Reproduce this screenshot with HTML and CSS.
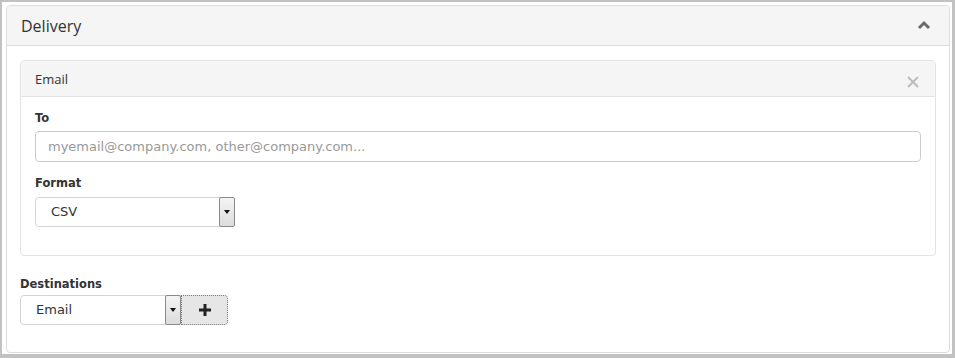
FILE: index.html
```html
<!DOCTYPE html>
<html lang="en">
<head>
<meta charset="UTF-8" />
<meta name="viewport" content="width=device-width,initial-scale=1.0" />
<title>Delivery</title>
<link rel="stylesheet" href="styles.css">
</head>
<body>
  <div class="frame">
    <div class="panel">
      <div class="panel-head">
        <span class="panel-title">Delivery</span>
        <svg class="chevron" width="14" height="10" viewBox="0 0 14 10"><path d="M2 8 L7 3 L12 8" fill="none" stroke="#6b6b6b" stroke-width="3"/></svg>
      </div>
      <div class="panel-body">
        <div class="card">
          <div class="card-head">
            <span class="card-title">Email</span>
            <svg class="close" width="12" height="12" viewBox="0 0 12 12"><path d="M1 1 L11 11 M11 1 L1 11" fill="none" stroke="#bdbdbd" stroke-width="2"/></svg>
          </div>
          <div class="card-body">
            <label class="field-label">To</label>
            <div class="text-input">myemail@company.com, other@company.com...</div>

            <label class="field-label gap">Format</label>
            <div class="select select-format">
              <span class="select-value">CSV</span>
              <span class="select-arrow"></span>
            </div>
          </div>
        </div>

        <label class="field-label">Destinations</label>
        <div class="dest-row">
          <div class="select select-dest">
            <span class="select-value">Email</span>
            <span class="select-arrow"></span>
          </div>
          <button class="add-btn" type="button">
            <svg width="12" height="12" viewBox="0 0 12 12"><path d="M6 0 V12 M0 6 H12" fill="none" stroke="#222" stroke-width="3"/></svg>
          </button>
        </div>
      </div>
    </div>
  </div>
</body>
</html>
```

FILE: styles.css
```css
html, body { margin: 0; padding: 0; background: #fff; }
body { font-family: "DejaVu Sans", Verdana, sans-serif; color: #333; }
.frame { height: 358px; box-sizing: border-box; border-style: solid; border-color: #c2c2c2; border-width: 2px 3px 4px 2px; padding: 3px 2px 1px 4px; }
.panel { height: 100%; box-sizing: border-box; border: 1px solid #ddd; border-radius: 4px; display: flex; flex-direction: column; }
.panel-head { height: 39px; background: #f5f5f5; border-bottom: 1px solid #ddd; border-radius: 4px 4px 0 0; display: flex; align-items: center; justify-content: space-between; padding: 0 18px 0 14px; }
.panel-title { font-family: "Open Sans", sans-serif; font-size: 16px; color: #333; }
.chevron { margin-top: -1px; }
.panel-body { padding: 14px 13px 0 13px; }
.card { border: 1px solid #e3e3e3; border-radius: 4px; margin-bottom: 20px; }
.card-head { height: 35px; background: #f5f5f5; border-bottom: 1px solid #e3e3e3; display: flex; align-items: center; justify-content: space-between; padding: 0 16px 0 14px; }
.card-title { font-family: "Open Sans", sans-serif; font-size: 13px; color: #333; }
.close { margin-top: 6px; }
.card-body { padding: 13px 14px 28px 14px; }
.field-label { display: block; font-weight: bold; font-size: 11.5px; line-height: 17px; color: #333; margin-bottom: 4px; }
.field-label.gap { margin-top: 13px; margin-bottom: 5px; }
.text-input { height: 29px; border: 1px solid #ccc; border-radius: 4px; padding: 0 12px; font-size: 13px; line-height: 29px; color: #999; }
.select { height: 30px; box-sizing: border-box; border: 1px solid #d4d4d4; border-radius: 4px; display: flex; align-items: stretch; background: #fff; }
.select-format { width: 200px; }
.select-dest { width: 161px; border-radius: 4px 0 0 4px; }
.select-value { flex: 1; padding-left: 15px; font-size: 13px; line-height: 28px; color: #333; }
.select-arrow { width: 14px; margin: -1px -1px -1px 0; border: 1px solid #8a8a8a; border-radius: 2px; background: linear-gradient(#f4f4f4, #dcdcdc); display: flex; align-items: center; justify-content: center; }
.select-arrow::after { content: ""; border-left: 3px solid transparent; border-right: 3px solid transparent; border-top: 4px solid #111; }
.dest-row { display: flex; margin-top: -2px; }
.add-btn { width: 47px; height: 30px; box-sizing: border-box; border: 1px dotted #777; border-radius: 0 4px 4px 0; background: #e6e6e6; display: flex; align-items: center; justify-content: center; padding: 0; }
```
